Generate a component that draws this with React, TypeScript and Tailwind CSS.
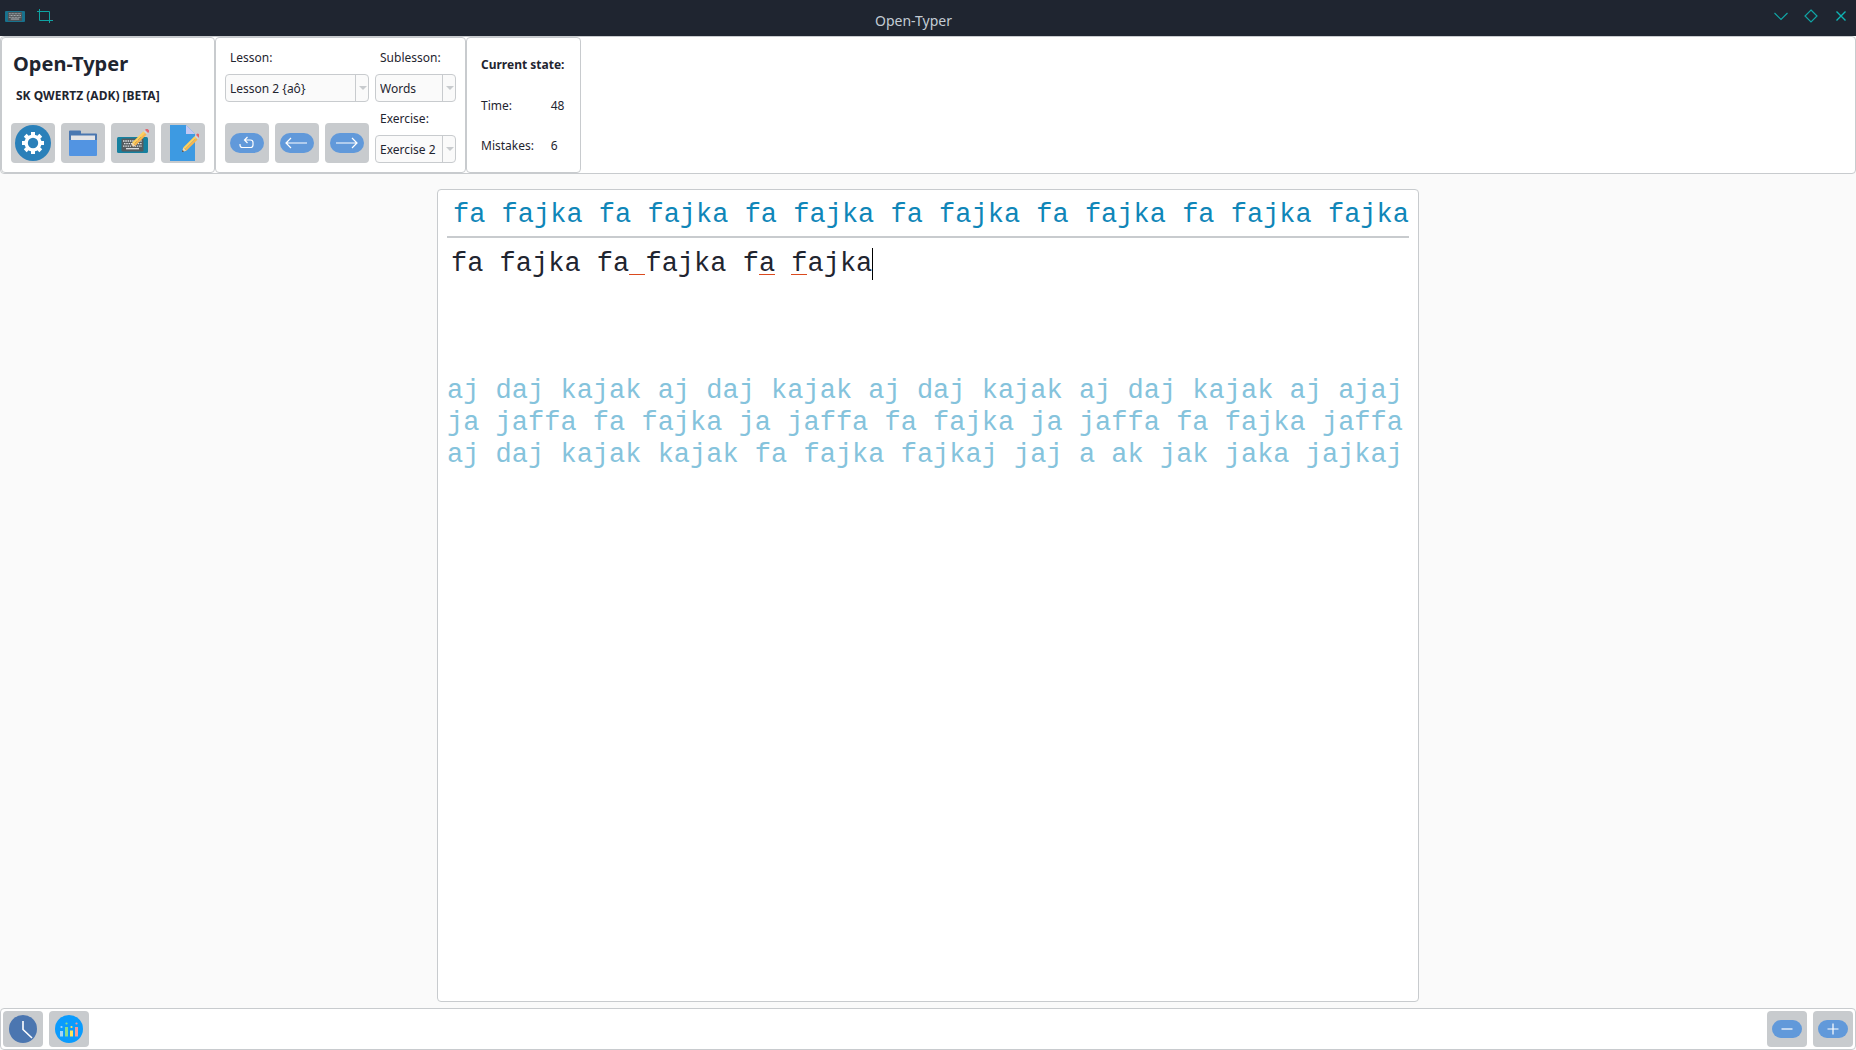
import { useState, type ReactNode } from "react";

const NEXT_LINES = [
  "aj daj kajak aj daj kajak aj daj kajak aj daj kajak aj ajaj",
  "ja jaffa fa fajka ja jaffa fa fajka ja jaffa fa fajka jaffa",
  "aj daj kajak kajak fa fajka fajkaj jaj a ak jak jaka jajkaj",
];

const TYPED: { text: string; wrong?: boolean }[] = [
  { text: "fa fajka fa" },
  { text: " ", wrong: true },
  { text: "fajka f" },
  { text: "a", wrong: true },
  { text: " " },
  { text: "f", wrong: true },
  { text: "ajka" },
];

function Gear() {
  return (
    <svg width="36" height="36" viewBox="0 0 36 36" aria-hidden="true">
      <circle cx="18" cy="18" r="18" fill="#2a80b9" />
      <g fill="#fff">
        {[0, 45, 90, 135].map((a) => (
          <rect key={a} x="16" y="7" width="4" height="22" transform={`rotate(${a} 18 18)`} />
        ))}
        <circle cx="18" cy="18" r="8.6" />
      </g>
      <circle cx="18" cy="18" r="5.2" fill="#2a80b9" />
    </svg>
  );
}

function Folder() {
  return (
    <svg width="28" height="26" viewBox="0 0 28 26" aria-hidden="true">
      <path d="M0 1.5Q0 0.5 1 0.5H11Q12 0.5 12 1.5V3.500H27Q28 3.500 28 4.500V14H0z" fill="#4a77b0" />
      <path d="M2 5.500H26V12H2z" fill="#e4e4e6" />
      <path d="M0 10H28V25Q28 26 27 26H1Q0 26 0 25z" fill="#5294e2" />
    </svg>
  );
}

function Pencil() {
  return (
    <g transform="rotate(-45)">
      <path d="M0 0L4 -2.200V2.200z" fill="#f3d9b1" />
      <path d="M0 0L1.800 -1V1z" fill="#333" />
      <rect x="4" y="-2.200" width="16" height="2.200" fill="#ffd15c" />
      <rect x="4" y="0" width="16" height="2.200" fill="#f8b64c" />
      <rect x="20" y="-2.200" width="2" height="4.400" fill="#cfd5da" />
      <rect x="22" y="-2.200" width="2.500" height="4.400" rx="0.800" fill="#e2646c" />
    </g>
  );
}

function Keys() {
  return (
    <>
      <rect width="31" height="16" rx="1.500" fill="#16809f" />
      <rect x="4.500" y="1.500" width="22" height="13" rx="1" fill="#555b5e" />
      <g stroke="#dfe3e4" strokeWidth="1.300">
        <path d="M6 4H25" strokeDasharray="1.500 0.800" />
        <path d="M7 6.600H25" strokeDasharray="1.500 0.800" />
        <path d="M6 9.200H25" strokeDasharray="1.500 0.800" />
        <path d="M9 11.700H22" />
      </g>
    </>
  );
}

function KeyboardEdit() {
  return (
    <svg width="32" height="28" viewBox="0 0 32 28" aria-hidden="true">
      <g transform="translate(0 8)">
        <Keys />
      </g>
      <g transform="translate(14 18)">
        <Pencil />
      </g>
    </svg>
  );
}

function DocEdit() {
  return (
    <svg width="32" height="36" viewBox="0 0 32 36" aria-hidden="true">
      <path d="M3 0H19L28 9V36H3z" fill="#3d9ae2" />
      <path d="M19 0L28 9H19z" fill="#c3c8f3" />
      <g transform="translate(15 27)">
        <Pencil />
      </g>
    </svg>
  );
}

function Clock() {
  return (
    <svg width="28" height="28" viewBox="0 0 28 28" aria-hidden="true">
      <circle cx="14" cy="14" r="14" fill="#4b76b0" />
      <path d="M14 6V14.500L23 23" fill="none" stroke="#fff" strokeWidth="1.600" />
    </svg>
  );
}

function Stats() {
  const bars = [
    { x: 5, y: 16, c: "#a6d5fa", d: 12 },
    { x: 10, y: 12, c: "#8bdc8e", d: 8.5 },
    { x: 15, y: 15.5, c: "#ffe45c", d: 12 },
    { x: 20, y: 12, c: "#f79a94", d: 8.5 },
  ];
  return (
    <svg width="28" height="28" viewBox="0 0 28 28" aria-hidden="true">
      <circle cx="14" cy="14" r="14" fill="#0a9bfd" />
      {bars.map((b) => (
        <g key={b.x} fill={b.c}>
          <rect x={b.x} y={b.y} width="3" height={21.5 - b.y} />
          <circle cx={b.x + 1.5} cy={b.d} r="1.1" />
        </g>
      ))}
    </svg>
  );
}

function Pill({ children, small }: { children: ReactNode; small?: boolean }) {
  return (
    <svg width={small ? 30 : 34} height={small ? 18 : 20} viewBox={small ? "0 0 30 18" : "0 0 34 20"} fill="none" aria-hidden="true">
      <rect width={small ? 30 : 34} height={small ? 18 : 20} rx={small ? 9 : 10} fill="#6199da" />
      <g stroke="#fff" strokeWidth="1.2">{children}</g>
    </svg>
  );
}

function ToolButton({ label, children }: { label: string; children: ReactNode }) {
  return (
    <button aria-label={label} className="flex h-10 w-11 items-center justify-center rounded bg-[#c8cbce]">
      {children}
    </button>
  );
}

function FootButton({ label, children }: { label: string; children: ReactNode }) {
  return (
    <button aria-label={label} className="flex h-9 w-10 items-center justify-center rounded bg-[#c8cbce]">
      {children}
    </button>
  );
}

function Combo({ id, value }: { id: string; value: string }) {
  return (
    <div className="relative h-7">
      <select
        id={id}
        defaultValue={value}
        className="h-7 w-full appearance-none rounded border border-[#c8cbce] bg-[#fafafa] pt-px pr-3 pl-1 text-[12px] leading-5 outline-none"
      >
        <option>{value}</option>
      </select>
      <span className="pointer-events-none absolute inset-y-0 right-0 flex w-3.5 items-center justify-center border-l border-[#c8cbce]">
        <svg width="8" height="4" viewBox="0 0 8 4" aria-hidden="true">
          <path d="M0 0H8L4 4z" fill="#c8cbce" />
        </svg>
      </span>
    </div>
  );
}

function TypingLine() {
  const [value, setValue] = useState("");
  return (
    <label className="relative mt-2.5 ml-1 flex items-center text-[27px] leading-8 whitespace-pre text-[#1f2530]">
      <span>
        {TYPED.map((part, i) =>
          part.wrong ? (
            <span key={i} className="relative">
              {part.text}
              <span className="absolute inset-x-0 bottom-1 h-px bg-[#da4a1e]" />
            </span>
          ) : (
            part.text
          ),
        )}
        {value}
      </span>
      <span className="h-8 w-px bg-black" />
      <input
        aria-label="Typed text"
        value={value}
        onChange={(e) => setValue(e.target.value)}
        className="absolute inset-0 bg-transparent text-transparent caret-transparent outline-none"
      />
    </label>
  );
}

const PANEL = "rounded border border-[#c8cbce] bg-white";

export default function App() {
  return (
    <div className="flex min-h-screen flex-col bg-[#fafafa] font-['Noto_Sans',sans-serif] text-[12px] leading-5 text-[#1f2530]">
      <header className="flex h-9 items-center bg-[#1f2530] text-[#c3ccd4]">
        <div className="flex items-center gap-3 pb-1 pl-[5px]">
          <svg width="20" height="11" viewBox="0 0 31 16" preserveAspectRatio="none" opacity="0.85" aria-hidden="true">
            <Keys />
          </svg>
          <svg width="16" height="14" viewBox="0 0 16 14" fill="none" stroke="#0fa3a3" aria-hidden="true">
            <path d="M0 2.500H12.500V14M2.500 0V11.500H16" />
          </svg>
        </div>
        <h1 className="flex-1 pt-1.5 text-center text-[14px]">Open-Typer</h1>
        <div className="flex items-center justify-end gap-4 pr-2 pb-1">
          <button aria-label="Minimize">
            <svg width="14" height="14" viewBox="0 0 14 14" fill="none" stroke="#11a5a5" strokeWidth="1.200" aria-hidden="true">
              <path d="M0.500 4L7 10.500L13.500 4" />
            </svg>
          </button>
          <button aria-label="Maximize">
            <svg width="14" height="14" viewBox="0 0 14 14" fill="none" stroke="#11a5a5" strokeWidth="1.200" aria-hidden="true">
              <path d="M7 1L13 7L7 13L1 7z" />
            </svg>
          </button>
          <button aria-label="Close">
            <svg width="14" height="14" viewBox="0 0 14 14" fill="none" stroke="#0fb5b5" strokeWidth="1.400" aria-hidden="true">
              <path d="M2.500 2.500L11.500 11.500M11.500 2.500L2.500 11.500" />
            </svg>
          </button>
        </div>
      </header>

      <section className={`${PANEL} flex`}>
        <div className={`${PANEL} flex flex-col px-[9px] pt-2 pb-[9px]`}>
          <h2 className="px-0.5 pt-1 text-[20px] leading-7 font-bold">Open-Typer</h2>
          <p className="mt-2.5 px-[5px] leading-4 font-bold">SK QWERTZ (ADK) [BETA]</p>
          <div className="mt-auto flex gap-1.5">
            <ToolButton label="Settings"><Gear /></ToolButton>
            <ToolButton label="Open file"><Folder /></ToolButton>
            <ToolButton label="Keyboard layout"><KeyboardEdit /></ToolButton>
            <ToolButton label="Edit exercise"><DocEdit /></ToolButton>
          </div>
        </div>

        <div className={`${PANEL} flex gap-1.5 px-[9px] pt-2.5 pb-[9px]`}>
          <div className="flex w-36 flex-col">
            <label htmlFor="lesson" className="px-[5px]">Lesson:</label>
            <div className="mt-1.5">
              <Combo id="lesson" value="Lesson 2 {aô}" />
            </div>
            <div className="mt-auto flex gap-1.5">
              <ToolButton label="Repeat">
                <Pill><path d="M10 11V12Q10 14.500 12.500 14.500H20.500Q23 14.500 23 12V9.500Q23 7 20.500 7H15M17.500 4L14.500 7L17.500 10" /></Pill>
              </ToolButton>
              <ToolButton label="Previous">
                <Pill><path d="M27 10H6M11 5L6 10L11 15" /></Pill>
              </ToolButton>
              <ToolButton label="Next">
                <Pill><path d="M6 10H27M22 5L27 10L22 15" /></Pill>
              </ToolButton>
            </div>
          </div>
          <div className="flex w-[81px] flex-col">
            <label htmlFor="sublesson" className="px-[5px]">Sublesson:</label>
            <div className="mt-1.5">
              <Combo id="sublesson" value="Words" />
            </div>
            <label htmlFor="exercise" className="mt-auto mb-1.5 px-[5px]">Exercise:</label>
            <Combo id="exercise" value="Exercise 2" />
          </div>
        </div>

        <div className={`${PANEL} flex h-[136px] flex-col justify-between pt-[17px] pr-4 pb-4 pl-3.5`}>
          <h3 className="font-bold">Current state:</h3>
          <dl className="grid grid-cols-[1fr_auto] gap-x-4 gap-y-5">
            <dt>Time:</dt>
            <dd>48</dd>
            <dt>Mistakes:</dt>
            <dd>6</dd>
          </dl>
        </div>
      </section>

      <main className="flex flex-1 justify-center pt-[15px] pb-1.5">
        <div className={`${PANEL} px-[9px] pt-[9px] font-['Liberation_Mono',monospace]`}>
          <p className="pl-1.5 text-[27px] leading-8 whitespace-pre text-[#0f86b8]">
            fa fajka fa fajka fa fajka fa fajka fa fajka fa fajka fajka
          </p>
          <hr className="mt-[5px] border-t-2 border-[#c8cbce]" />
          <TypingLine />
          <div className="mt-[95px] text-[27px] leading-8 whitespace-pre text-[#85c3dc]">
            {NEXT_LINES.map((line) => (
              <p key={line}>{line}</p>
            ))}
          </div>
        </div>
      </main>

      <footer className={`${PANEL} flex justify-between p-0.5`}>
        <div className="flex gap-1.5">
          <FootButton label="Timer"><Clock /></FootButton>
          <FootButton label="Statistics"><Stats /></FootButton>
        </div>
        <div className="flex gap-1.5">
          <FootButton label="Zoom out">
            <Pill small><path d="M9.500 9H20.500" /></Pill>
          </FootButton>
          <FootButton label="Zoom in">
            <Pill small><path d="M9.500 9H20.500M15 3.500V14.500" /></Pill>
          </FootButton>
        </div>
      </footer>
    </div>
  );
}
